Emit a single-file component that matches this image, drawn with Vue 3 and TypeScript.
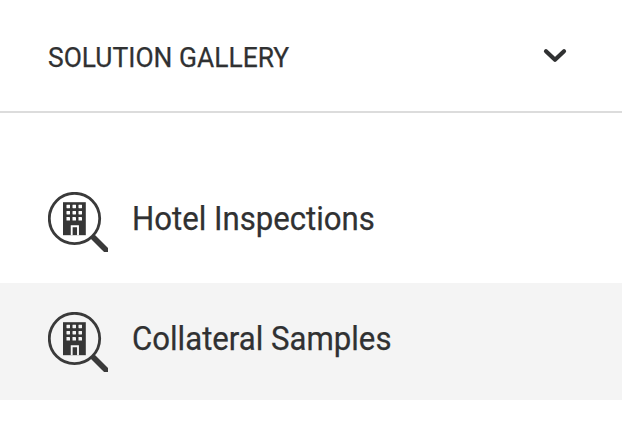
<script setup lang="ts">
interface Solution {
  name: string
  active: boolean
}

const solutions: Solution[] = [
  { name: 'Hotel Inspections', active: false },
  { name: 'Collateral Samples', active: true },
]

const columns = [18.5, 24.5, 30.5]
const rows = [12.7, 18.9, 25.1]
</script>

<template>
  <section class="gallery">
    <header class="heading">
      <h2>SOLUTION GALLERY</h2>
      <svg class="chevron" viewBox="0 0 24 16" aria-hidden="true">
        <path d="M3 3.2 12 11.8 21 3.2" />
      </svg>
    </header>
    <ul class="list">
      <li v-for="item in solutions" :key="item.name" :class="{ active: item.active }">
        <svg class="icon" viewBox="0 0 60 60" aria-hidden="true">
          <circle class="lens" cx="26.500" cy="26.500" r="25.200" />
          <path class="handle" d="M44.500 44.500 62 62" />
          <path class="building" d="M15 10.200H37.800V43.200H15Z" />
          <template v-for="y in rows" :key="y">
            <rect v-for="x in columns" :key="x" class="pane" :x="x" :y="y" width="3.500" height="3.500" rx="0.400" />
          </template>
          <path class="frame" d="M23.700 43.200V34.200H30V43.200" />
        </svg>
        <span class="name">{{ item.name }}</span>
      </li>
    </ul>
  </section>
</template>

<style>
body { background: #fff; }
</style>

<style scoped>
.gallery { height: 422px; overflow: hidden; font-family: Roboto, sans-serif; color: #303132; background: #fff; }
.heading { box-sizing: border-box; height: 113px; padding: 4px 55px 0 48px; display: flex; align-items: center; justify-content: space-between; border-bottom: 2px solid #dcdcdc; }
h2 { margin: 0; padding-top: 1px; font-size: 27px; line-height: 32px; font-weight: 400; transform: scaleX(0.978); transform-origin: left; -webkit-text-stroke: 0.25px #303132; }
.chevron { width: 24px; height: 16px; margin-bottom: 4px; fill: none; stroke: #303132; stroke-width: 4.2; stroke-linecap: round; stroke-linejoin: round; }
.list { list-style: none; margin: 0; padding: 50px 0 0; }
li { box-sizing: border-box; height: 120px; padding: 29px 48px 0; display: flex; align-items: flex-start; font-size: 33px; line-height: 54px; }
li.active { height: 117px; background: #f4f4f4; }
.name { transform: scaleX(0.944); transform-origin: left; -webkit-text-stroke: 0.25px #303132; }
.icon { width: 60px; height: 60px; margin-right: 24px; }
.lens { fill: none; stroke: #3a3a3a; stroke-width: 2.8; }
.handle { fill: none; stroke: #3a3a3a; stroke-width: 5.6; }
.building { fill: #363636; }
.pane { fill: #fff; }
.active .pane { fill: #f4f4f4; }
.frame { fill: none; stroke: #fff; stroke-width: 1.9; }
.active .frame { stroke: #f4f4f4; }
</style>
